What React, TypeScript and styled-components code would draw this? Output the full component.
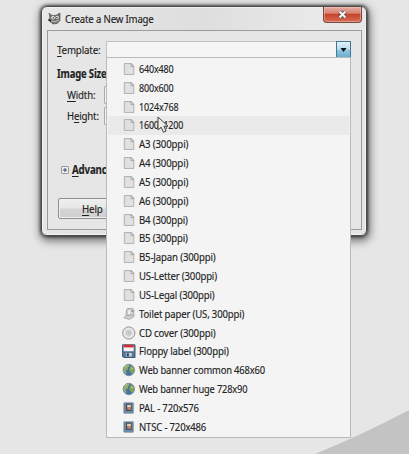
import React from 'react';
import styled, { createGlobalStyle } from 'styled-components';

const GlobalStyle = createGlobalStyle`
  * { box-sizing: border-box; }
  body { margin: 0; background: #e6e6e6; overflow: hidden; }
`;

const Desktop = styled.main`
  position: relative;
  width: 409px;
  height: 454px;
  padding: 6px 0 0 41px;
  overflow: hidden;
  background: #e6e6e6;
  font: 12px/18px "Noto Sans", "Open Sans", sans-serif;
  color: #222;
  -webkit-text-stroke: .15px #222;
`;

const Corner = styled.svg`
  position: absolute;
  right: 0;
  bottom: 0;
`;

const Window = styled.section`
  width: 326px;
  height: 230px;
  padding: 0 4px 5px 5px;
  display: flex;
  flex-direction: column;
  border: 1px solid #4a4a4a;
  border-radius: 6px;
  background: linear-gradient(100deg, #e8e8e8 0, #dedede 45%, #e9e9e9 75%, #e4e4e4);
  box-shadow: inset 0 0 0 1px #f3f3f3, 0 0 3px 1px rgba(0, 0, 0, .6), 1px 3px 9px 2px rgba(0, 0, 0, .5);
`;

const TitleBar = styled.header`
  display: flex;
  align-items: flex-start;
  height: 23px;
  flex: none;
`;

const Logo = styled.svg`
  margin: 5px 4px 0 1px;
  flex: none;
`;

const Label = styled.span<{ $scale?: number; $bold?: boolean }>`
  display: inline-block;
  font-size: 11.6px;
  letter-spacing: -.2px;
  font-weight: ${p => (p.$bold ? 700 : 400)};
  white-space: nowrap;
  transform: scaleX(${p => p.$scale ?? 0.84});
  transform-origin: left center;
  u { text-underline-offset: 2px; text-decoration-thickness: 1px; text-decoration-skip-ink: none; }
`;

const Title = styled.h1`
  margin: 3px auto 0 0;
  font-size: 11.6px;
  font-weight: 400;
  line-height: 18px;
  letter-spacing: -.2px;
  white-space: nowrap;
  transform: scaleX(.83);
  transform-origin: left center;
`;

const Close = styled.button`
  width: 39px;
  height: 16px;
  padding: 0;
  display: grid;
  place-items: center;
  border: 1px solid #754841;
  border-top: 0;
  border-radius: 0 0 4px 4px;
  background: linear-gradient(#e3b0a5, #d98070 42%, #c6432b 48%, #d76c55);
  box-shadow: inset 0 0 0 1px rgba(255, 205, 190, .45);
`;

const Client = styled.div`
  flex: 1;
  border: 1px solid #9b9b9b;
  background: #e6e6e6;
  padding: 10px 9px 10px 9px;
  display: flex;
  flex-direction: column;
`;

const TemplateRow = styled.div`
  display: flex;
  height: 17px;
  align-items: center;
`;

const LabelCell = styled.div`
  width: 49px;
  flex: none;
  line-height: 16px;
`;

const Combo = styled.div`
  width: 245px;
  height: 17px;
  flex: none;
  display: flex;
  justify-content: flex-end;
  border: 1px solid #c0c0c0;
  background: #f5f5f5;
`;

const ComboButton = styled.button`
  width: 15px;
  height: 17px;
  margin: -1px;
  padding: 0;
  display: grid;
  place-items: center;
  border: 1px solid #477796;
  background: linear-gradient(#e0f1f8, #b9ddec 48%, #91c5df 55%, #6caed0);
`;

const SectionTitle = styled.h2`
  width: 49px;
  margin: 7px 0 1px;
  font-size: 12px;
  line-height: 18px;
`;

const Field = styled.div`
  display: flex;
  align-items: center;
  height: 21px;
  padding-left: 10px;
`;

const FieldLabel = styled.div`
  width: 37px;
  flex: none;
`;

const Entry = styled.div`
  width: 60px;
  height: 18px;
  border: 1px solid #a9a9a9;
  border-radius: 1px;
  background: #f5f5f5;
`;

const Expander = styled.div`
  margin-top: 35px;
  padding-left: 4px;
  height: 18px;
  display: flex;
  align-items: center;
  gap: 3px;
`;

const HelpButton = styled.button`
  width: 70px;
  height: 21px;
  margin: 19px 0 0 1px;
  padding: 0 0 0 23px;
  flex: none;
  border: 1px solid #8d8d8d;
  border-radius: 2px;
  background: linear-gradient(#efefef, #e6e6e6 48%, #d5d5d5 52%, #cecece);
  box-shadow: inset 0 0 0 1px #f1f1f1;
  font: inherit;
  color: inherit;
  text-align: left;
`;

const Menu = styled.ul`
  position: absolute;
  left: 106px;
  top: 57px;
  width: 245px;
  height: 381px;
  margin: 0;
  padding: 1.5px 1px 1px;
  list-style: none;
  border: 1px solid #bababa;
  background: #f4f4f4;
  display: flex;
  flex-direction: column;
`;

const Item = styled.li<{ $active?: boolean }>`
  flex: none;
  height: 18.84px;
  display: flex;
  align-items: center;
  gap: 2.5px;
  padding-left: 14px;
  background: ${p => (p.$active ? '#eaeaea' : 'transparent')};
`;

const Pointer = styled.svg`
  position: absolute;
  left: 157px;
  top: 116px;
`;

type Kind = 'page' | 'roll' | 'disc' | 'floppy' | 'globe' | 'film';

const Glyph = ({ kind }: { kind: Kind }) => (
  <svg width="14" height="14" viewBox="0 0 14 14">
    {kind === 'page' && (
      <>
        <path d="M2.3 1.5h7.2L11.8 4v8.5H2.3z" fill="#dadada" stroke="#b5b5b5" />
        <path d="M3.7 3h5v3h2.2v5.5H3.7z" fill="#e1e1e1" />
        <path d="M9 1.7v2.8h2.8z" fill="#fafafa" stroke="#929292" strokeWidth=".7" />
      </>
    )}
    {kind === 'roll' && (
      <>
        <path d="M4.5 2.5Q5 1.2 7 1.5h3.5Q12.5 2 11.8 4v4.3L8 9H4z" fill="#d4d4d4" stroke="#9c9c9c" strokeWidth=".8" />
        <path d="M5.8 2.4l-.5 5 3.2.6.7-5z" fill="#f2f2f2" stroke="#b0b0b0" strokeWidth=".6" />
        <path d="M4 8.6L1.8 10.8l5.5 1.6 4.5-2.6V8z" fill="#cfcfcf" stroke="#9c9c9c" strokeWidth=".7" />
        <circle cx="10.4" cy="4" r="1" fill="#909090" />
      </>
    )}
    {kind === 'disc' && (
      <>
        <circle cx="6.8" cy="7" r="6.1" fill="#dedede" stroke="#929292" />
        <circle cx="6.8" cy="7" r="4.7" fill="none" stroke="#ebebeb" strokeWidth="1.2" />
        <circle cx="6.8" cy="7" r="2.1" fill="#eee" stroke="#a8a8a8" strokeWidth=".8" />
        <circle cx="6.8" cy="7" r=".8" fill="#8a8a8a" />
      </>
    )}
    {kind === 'floppy' && (
      <>
        <path d="M.5.8h12.5v12.7H1.7L.5 12.2z" fill="#54799d" stroke="#3d5f82" />
        <path d="M1.7 1h10v6.2h-10z" fill="#f6f2f1" />
        <path d="M1.7.8h10v2.6h-10z" fill="#d92c2c" />
        <path d="M3.3 8.5h7V13h-7z" fill="#c8cdd1" stroke="#38536d" strokeWidth=".6" />
        <path d="M4.8 9.3h2v3h-2z" fill="#253e57" />
      </>
    )}
    {kind === 'globe' && (
      <>
        <circle cx="6.8" cy="7" r="5.7" fill="#4673a5" stroke="#71899b" strokeWidth=".8" />
        <path d="M1.8 4Q4 1 6.8 1.5L7.5 3 6 4.6 5.5 7 3.4 7.5 4.8 10 3.6 11.2 1.3 8z" fill="#91ad70" />
        <path d="M8.2 3.5L10.8 2.7 12.3 6 11.4 9.8 9.6 11 8.4 8.7 7 7.2 7.8 5z" fill="#83a650" />
        <path d="M3 4l2-1.7M9 5l2 .8" stroke="#c1cf9c" />
      </>
    )}
    {kind === 'film' && (
      <>
        <rect x="1.6" y="1.5" width="10" height="11" rx="1" fill="#718ca4" stroke="#9bacba" strokeWidth=".8" />
        <path d="M2.8 2.5v9M10.6 2.5v9" stroke="#5b748a" strokeDasharray="1 1" />
        <rect x="4" y="2.6" width="5.6" height="7.4" fill="#3d4f60" />
        <path d="M5.1 3.8h3.8v4.8H5.1z" fill="#e2cdb7" />
        <path d="M5 6.2h1.8v2.6H5zM7.4 6h1.5v2.6H7.4z" fill="#b8622f" />
      </>
    )}
  </svg>
);

const templates: { name: string; kind: Kind; scale: number }[] = [
  { name: '640x480', kind: 'page', scale: .775 },
  { name: '800x600', kind: 'page', scale: .775 },
  { name: '1024x768', kind: 'page', scale: .775 },
  { name: '1600x1200', kind: 'page', scale: .77 },
  { name: 'A3 (300ppi)', kind: 'page', scale: .835 },
  { name: 'A4 (300ppi)', kind: 'page', scale: .835 },
  { name: 'A5 (300ppi)', kind: 'page', scale: .835 },
  { name: 'A6 (300ppi)', kind: 'page', scale: .835 },
  { name: 'B4 (300ppi)', kind: 'page', scale: .825 },
  { name: 'B5 (300ppi)', kind: 'page', scale: .825 },
  { name: 'B5-Japan (300ppi)', kind: 'page', scale: .83 },
  { name: 'US-Letter (300ppi)', kind: 'page', scale: .825 },
  { name: 'US-Legal (300ppi)', kind: 'page', scale: .825 },
  { name: 'Toilet paper (US, 300ppi)', kind: 'roll', scale: .825 },
  { name: 'CD cover (300ppi)', kind: 'disc', scale: .83 },
  { name: 'Floppy label (300ppi)', kind: 'floppy', scale: .83 },
  { name: 'Web banner common 468x60', kind: 'globe', scale: .81 },
  { name: 'Web banner huge 728x90', kind: 'globe', scale: .8 },
  { name: 'PAL - 720x576', kind: 'film', scale: .82 },
  { name: 'NTSC - 720x486', kind: 'film', scale: .82 },
];

export default function App() {
  return (
    <>
      <GlobalStyle />
      <Desktop>
        <Corner width="94" height="46" viewBox="0 0 94 46">
          <path d="M0 46Q49 26 94 2V46z" fill="#c3c3c3" />
        </Corner>
        <Window>
          <TitleBar>
            <Logo width="13" height="13" viewBox="0 0 13 13">
              <path d="M1 1l3 2.6 4-.3L12 1v7.5L9.2 11.5 5 12 2 9.5.4 7.5 2 6z" fill="#74716c" stroke="#4c4b48" strokeWidth=".6" />
              <circle cx="5" cy="5.8" r="1.8" fill="#eee" />
              <circle cx="9.2" cy="5.3" r="1.6" fill="#eee" />
              <circle cx="5.2" cy="5.9" r=".7" fill="#111" />
              <circle cx="9" cy="5.5" r=".7" fill="#111" />
              <path d="M3 9q4 2 8-1" fill="none" stroke="#c3c1b7" />
              <path d="M.5 7.8L3 9" stroke="#222" strokeWidth="1.4" />
            </Logo>
            <Title>Create a New Image</Title>
            <Close aria-label="Close">
              <svg width="11" height="9" viewBox="0 0 11 9">
                <path d="M2.5 1.5l6 6m0-6l-6 6" stroke="#654e4c" strokeWidth="3.8" />
                <path d="M2.5 1.5l6 6m0-6l-6 6" stroke="#f6f6f6" strokeWidth="2" />
              </svg>
            </Close>
          </TitleBar>
          <Client>
            <TemplateRow>
              <LabelCell><Label $scale={.84}><u>T</u>emplate:</Label></LabelCell>
              <Combo>
                <ComboButton aria-label="Choose a template">
                  <svg width="7" height="4" viewBox="0 0 7 4"><path d="M.5 0h6l-3 4z" fill="#081018" /></svg>
                </ComboButton>
              </Combo>
            </TemplateRow>
            <SectionTitle><Label $bold $scale={.82}>Image Size</Label></SectionTitle>
            <Field><FieldLabel><Label $scale={.83}><u>W</u>idth:</Label></FieldLabel><Entry /></Field>
            <Field><FieldLabel><Label $scale={.83}>H<u>e</u>ight:</Label></FieldLabel><Entry /></Field>
            <Expander>
              <svg width="8" height="8" viewBox="0 0 8 8">
                <rect x=".5" y=".5" width="7" height="7" rx=".6" fill="#eee" stroke="#969696" />
                <path d="M2 4h4M4 2v4" stroke="#344a76" />
              </svg>
              <Label $bold $scale={.84}><u>A</u>dvanc</Label>
            </Expander>
            <HelpButton><Label $scale={.84}><u>H</u>elp</Label></HelpButton>
          </Client>
        </Window>
        <Menu>
          {templates.map((t, i) => (
            <Item key={t.name} $active={i === 3}>
              <Glyph kind={t.kind} />
              <Label $scale={t.scale}>{t.name}</Label>
            </Item>
          ))}
        </Menu>
        <Pointer width="13" height="18" viewBox="0 0 13 18">
          <path d="M1 1v13l3.2-2.8 2.2 5 2.7-1.2-2.2-4.8H11z" fill="#eee" stroke="#444" />
        </Pointer>
      </Desktop>
    </>
  );
}
